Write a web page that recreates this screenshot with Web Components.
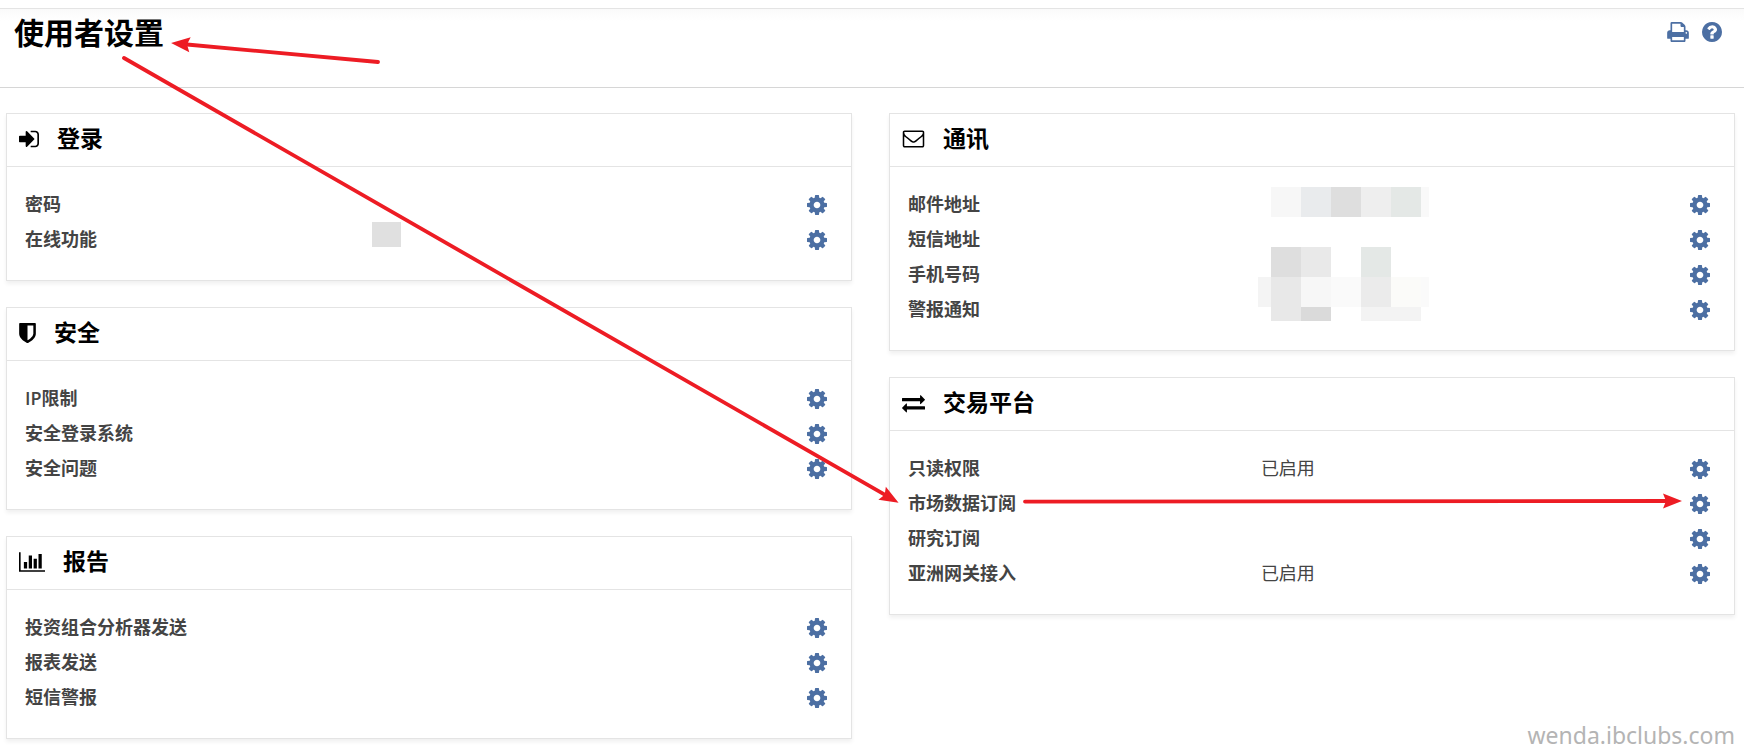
<!DOCTYPE html>
<html lang="zh-CN">
<head>
<meta charset="utf-8">
<meta name="viewport" content="width=device-width, initial-scale=1">
<title>使用者设置</title>
<style>
    body {
        margin: 0;
        background: #fff;
        color: #444;
        font-family: "Open Sans", "Noto Sans CJK SC", sans-serif;
        font-size: 18px;
    }
</style>
</head>
<body>
<settings-page>
    <page-header slot="header" heading="使用者设置"></page-header>

    <settings-card slot="left" icon="login" heading="登录">
        <setting-row label="密码"></setting-row>
        <setting-row label="在线功能"></setting-row>
        <pixel-mask slot="mask" name="online"></pixel-mask>
    </settings-card>
    <settings-card slot="left" icon="shield" heading="安全">
        <setting-row label="IP限制"></setting-row>
        <setting-row label="安全登录系统"></setting-row>
        <setting-row label="安全问题"></setting-row>
    </settings-card>
    <settings-card slot="left" icon="chart" heading="报告">
        <setting-row label="投资组合分析器发送"></setting-row>
        <setting-row label="报表发送"></setting-row>
        <setting-row label="短信警报"></setting-row>
    </settings-card>

    <settings-card slot="right" icon="mail" heading="通讯">
        <setting-row label="邮件地址"></setting-row>
        <setting-row label="短信地址"></setting-row>
        <setting-row label="手机号码"></setting-row>
        <setting-row label="警报通知"></setting-row>
        <pixel-mask slot="mask" name="contact"></pixel-mask>
    </settings-card>
    <settings-card slot="right" icon="exchange" heading="交易平台">
        <setting-row label="只读权限">已启用</setting-row>
        <setting-row label="市场数据订阅"></setting-row>
        <setting-row label="研究订阅"></setting-row>
        <setting-row label="亚洲网关接入">已启用</setting-row>
    </settings-card>

    <arrow-overlay slot="overlay"></arrow-overlay>
    <site-watermark slot="overlay">wenda.ibclubs.com</site-watermark>
</settings-page>

<script>
// viewBox, width, height, path
const ICONS = {
    cog: ['128 128 1536 1536', 20, 20, 'M1152 896q0-106-75-181t-181-75-181 75-75 181 75 181 181 75 181-75 75-181zm512-109v222q0 12-8 23t-20 13l-185 28q-19 54-39 91 35 50 107 138 10 12 10 25t-9 23q-27 37-99 108t-94 71q-12 0-26-9l-138-108q-44 23-91 38-16 136-29 186-7 28-36 28h-222q-14 0-24.5-8.5t-11.5-21.5l-28-184q-49-16-90-37l-141 107q-10 9-25 9-14 0-25-11-126-114-165-168-7-10-7-23 0-12 8-23 15-21 51-66.5t54-70.5q-27-50-41-99l-183-27q-13-2-21-12.5t-8-23.5v-222q0-12 8-23t19-13l186-28q14-46 39-92-40-57-107-138-10-12-10-24 0-10 9-23 26-36 98.5-107.5t94.5-71.5q13 0 26 10l138 107q44-23 91-38 16-136 29-186 7-28 36-28h222q14 0 24.5 8.5t11.5 21.5l28 184q49 16 90 37l142-107q9-9 24-9 13 0 25 10 129 119 165 170 7 8 7 22 0 12-8 23-15 21-51 66.5t-54 70.5q26 50 41 98l183 28q13 2 21 12.5t8 23.5z'],
    help: ['128 128 1536 1536', 20, 20, 'M1024 1376v-192q0-14-9-23t-23-9h-192q-14 0-23 9t-9 23v192q0 14 9 23t23 9h192q14 0 23-9t9-23zm256-672q0-88-55.5-163t-138.5-116-170-41q-243 0-371 213-15 24 8 42l132 100q7 6 19 6 16 0 25-12 53-68 86-92 34-24 86-24 48 0 85.5 26t37.5 59q0 38-20 61t-68 45q-63 28-115.5 86.5t-52.5 125.5v36q0 14 9 23t23 9h192q14 0 23-9t9-23q0-19 21.5-49.5t54.5-49.5q32-18 49-28.5t46-35 44.5-48 28-60.5 12.5-81zm384 192q0 209-103 385.5t-279.5 279.5-385.5 103-385.5-103-279.5-279.5-103-385.5 103-385.5 279.5-279.5 385.5-103 385.5 103 279.5 279.5 103 385.5z'],
    print: ['64 128 1664 1536', 22, 20, 'M448 1536h896v-256h-896v256zm0-640h896v-384h-160q-40 0-68-28t-28-68v-160h-640v640zm1152 64q0-26-19-45t-45-19-45 19-19 45 19 45 45 19 45-19 19-45zm128 0v416q0 13-9.5 22.5t-22.5 9.5h-224v160q0 40-28 68t-68 28h-960q-40 0-68-28t-28-68v-160h-224q-13 0-22.5-9.5t-9.5-22.5v-416q0-79 56.5-135.5t135.5-56.5h64v-544q0-40 28-68t68-28h672q40 0 88 20t76 48l152 152q28 28 48 76t20 88v256h64q79 0 135.5 56.5t56.5 135.5z'],
    login: ['128 128 1536 1536', 20, 20, 'M1312 896q0 26-19 45l-544 544q-19 19-45 19t-45-19-19-45v-288h-448q-26 0-45-19t-19-45v-384q0-26 19-45t45-19h448v-288q0-26 19-45t45-19 45 19l544 544q19 19 19 45zm352-352v704q0 119-84.5 203.5t-203.5 84.5h-320q-13 0-22.5-9.5t-9.5-22.5q0-4-1-20t-.5-26.5 3-23.5 10-19.5 20.5-6.5h320q66 0 113-47t47-113v-704q0-66-47-113t-113-47h-312l-11.5-1-11.5-3-8-5.5-7-9-2-13.5q0-4-1-20t-.5-26.5 3-23.5 10-19.5 20.5-6.5h320q119 0 203.5 84.5t84.5 203.5z'],
    shield: ['256 128 1280 1536', 17, 20, 'M1344 960v-640h-448v1137q119-63 213-137 235-184 235-360zm192-768v768q0 86-33.5 170.5t-83 150-118 127.5-126.5 103-121 77.5-89.5 49.5-42.5 20q-12 6-26 6t-26-6q-16-7-42.5-20t-89.5-49.5-121-77.5-126.5-103-118-127.5-83-150-33.5-170.5v-768q0-26 19-45t45-19h1152q26 0 45 19t19 45z'],
    chart: ['0 128 2048 1536', 26, 20, 'M640 896v512h-256v-512h256zm384-512v1024h-256v-1024h256zm1024 1152v128h-2048v-1536h128v1408h1920zm-640-896v768h-256v-768h256zm384-384v1152h-256v-1152h256z'],
    mail: ['0 128 1792 1664', 23, 20, 'M1664 1504v-768q-32 36-69 66-268 206-426 338-51 43-83 67t-86.5 48.5-102.5 24.5h-2q-48 0-102.5-24.5t-86.5-48.5-83-67q-158-132-426-338-37-30-69-66v768q0 13 9.5 22.5t22.5 9.5h1472q13 0 22.5-9.5t9.5-22.5zm0-1051v-24.5l-.5-13-3-12.5-5.5-9-9-7.5-14-2.5h-1472q-13 0-22.5 9.5t-9.5 22.5q0 168 147 284 193 152 401 317 6 5 35 29.5t46 37.5 44.5 31.5 50.5 27.5 43 9h2q20 0 43-9t50.5-27.5 44.5-31.5 46-37.5 35-29.5q208-165 401-317 54-43 100.5-115.5t46.5-131.5zm128-37v1088q0 66-47 113t-113 47h-1472q-66 0-113-47t-47-113v-1088q0-66 47-113t113-47h1472q66 0 113 47t47 113z'],
    exchange: ['0 128 1792 1536', 23, 20, 'M1792 1184v192q0 13-9.5 22.5t-22.5 9.5h-1376v192q0 13-9.5 22.5t-22.5 9.5q-12 0-24-10l-319-320q-9-9-9-22 0-14 9-23l320-320q9-9 23-9 13 0 22.5 9.5t9.5 22.5v192h1376q13 0 22.5 9.5t9.5 22.5zm0-544q0 14-9 23l-320 320q-9 9-23 9-13 0-22.5-9.5t-9.5-22.5v-192h-1376q-13 0-22.5-9.5t-9.5-22.5v-192q0-13 9.5-22.5t22.5-9.5h1376v-192q0-14 9-23t23-9q12 0 24 10l319 319q9 9 9 23z']
};

// x, y, width, height, colour of each mosaic tile, relative to the card
const MASKS = {
    online: [[365, 108, 29, 25, '#e0e0e0']],
    contact: [
        [381, 73, 30, 30, '#f7f7f7'], [411, 73, 30, 30, '#e9ebed'], [441, 73, 30, 30, '#dedede'],
        [471, 73, 30, 30, '#eeeeee'], [501, 73, 30, 30, '#e4e8e6'], [531, 73, 8, 30, '#f9f9f9'],
        [381, 133, 30, 30, '#dedede'], [411, 133, 30, 30, '#e9e9e9'], [471, 133, 30, 30, '#e4e8e6'],
        [368, 163, 13, 30, '#f4f4f4'], [381, 163, 30, 44, '#e8e8e8'], [411, 163, 30, 30, '#f7f7f7'],
        [441, 163, 30, 30, '#fafafa'], [471, 163, 30, 30, '#ebebeb'], [501, 163, 30, 30, '#fbfbf9'],
        [531, 163, 8, 30, '#fafafa'], [411, 193, 30, 14, '#dadada'], [471, 193, 60, 14, '#f3f3f3']
    ]
};

class UiIcon extends HTMLElement {
    constructor() {
        super();
        this.attachShadow({ mode: 'open' });
    }

    connectedCallback() {
        const [box, width, height, path] = ICONS[this.getAttribute('name')];
        this.shadowRoot.innerHTML = `
            <style>
                :host { display: block; flex: none; }
                svg { display: block; fill: currentColor; }
            </style>
            <svg viewBox="${box}" width="${width}" height="${height}" aria-hidden="true"><path d="${path}"/></svg>
        `;
    }
}

class PageHeader extends HTMLElement {
    constructor() {
        super();
        this.attachShadow({ mode: 'open' });
    }

    connectedCallback() {
        this.shadowRoot.innerHTML = `
            <style>
                :host {
                    display: flex;
                    justify-content: space-between;
                    align-items: flex-start;
                    padding: 0 22px 30px 14px;
                    border-top: 1px solid #e4e4e4;
                    border-bottom: 1px solid #d6d6d6;
                    background: linear-gradient(#fafafa, #fff 12px);
                }

                h1 {
                    margin: 0;
                    color: #000;
                    font-size: 30px;
                    line-height: 48px;
                }

                .actions {
                    display: flex;
                    gap: 13px;
                    padding-top: 13px;
                }

                button {
                    padding: 0;
                    border: 0;
                    background: none;
                    color: #4c6fa3;
                    cursor: pointer;
                }
            </style>
            <h1>${this.getAttribute('heading')}</h1>
            <div class="actions">
                <button type="button" aria-label="打印"><ui-icon name="print"></ui-icon></button>
                <button type="button" aria-label="帮助"><ui-icon name="help"></ui-icon></button>
            </div>
        `;
    }
}

class SettingsCard extends HTMLElement {
    constructor() {
        super();
        this.attachShadow({ mode: 'open' });
    }

    connectedCallback() {
        this.shadowRoot.innerHTML = `
            <style>
                :host {
                    display: block;
                    position: relative;
                    border: 1px solid #e4e4e4;
                    background: #fff;
                    box-shadow: 0 3px 4px rgba(0, 0, 0, 0.06);
                }

                header {
                    display: flex;
                    align-items: center;
                    gap: 18px;
                    padding: 0 12px 3px;
                    border-bottom: 1px solid #e4e4e4;
                    color: #000;
                }

                h2 {
                    margin: 0;
                    font-size: 23px;
                    line-height: 49px;
                }

                .rows {
                    padding: 20px 24px 23px 18px;
                }
            </style>
            <header>
                <ui-icon name="${this.getAttribute('icon')}"></ui-icon>
                <h2>${this.getAttribute('heading')}</h2>
            </header>
            <div class="rows"><slot></slot></div>
            <slot name="mask"></slot>
        `;
    }
}

class SettingRow extends HTMLElement {
    constructor() {
        super();
        this.attachShadow({ mode: 'open' });
    }

    connectedCallback() {
        const label = this.getAttribute('label');
        this.shadowRoot.innerHTML = `
            <style>
                :host {
                    display: grid;
                    grid-template-columns: 44% 1fr auto;
                    align-items: center;
                    line-height: 35px;
                }

                .label {
                    font-weight: 600;
                }

                button {
                    padding: 0;
                    border: 0;
                    background: none;
                    color: #4c6fa3;
                    cursor: pointer;
                }
            </style>
            <span class="label">${label}</span>
            <span><slot></slot></span>
            <button type="button" aria-label="设置${label}"><ui-icon name="cog"></ui-icon></button>
        `;
    }
}

class PixelMask extends HTMLElement {
    constructor() {
        super();
        this.attachShadow({ mode: 'open' });
    }

    connectedCallback() {
        const tiles = MASKS[this.getAttribute('name')]
            .map(([x, y, w, h, fill]) => `<rect x="${x}" y="${y}" width="${w}" height="${h}" fill="${fill}"/>`)
            .join('');
        this.shadowRoot.innerHTML = `
            <style>
                :host {
                    position: absolute;
                    inset: 0;
                    pointer-events: none;
                }
                svg { display: block; width: 100%; height: 100%; }
            </style>
            <svg shape-rendering="crispEdges" aria-hidden="true">${tiles}</svg>
        `;
    }
}

class ArrowOverlay extends HTMLElement {
    constructor() {
        super();
        this.attachShadow({ mode: 'open' });
        this.shadowRoot.innerHTML = `
            <style>
                :host {
                    position: absolute;
                    inset: 0;
                    pointer-events: none;
                }
                svg { display: block; width: 100%; height: 100%; }
                line { stroke: #ed1c24; stroke-width: 3.8; stroke-linecap: round; }
            </style>
            <svg aria-hidden="true">
                <defs>
                    <marker id="head" markerUnits="userSpaceOnUse" markerWidth="22" markerHeight="18"
                            viewBox="0 0 22 18" refX="4" refY="9" orient="auto">
                        <path d="M1 1.5L20 9L1 16.5L4 9z" fill="#ed1c24"/>
                    </marker>
                </defs>
                <line x1="378" y1="62" x2="187" y2="44.5" marker-end="url(#head)"/>
                <line x1="124" y1="58" x2="884.7" y2="494.7" marker-end="url(#head)"/>
                <line x1="1025" y1="501.6" x2="1666" y2="501" marker-end="url(#head)"/>
            </svg>
        `;
    }
}

class SiteWatermark extends HTMLElement {
    constructor() {
        super();
        this.attachShadow({ mode: 'open' });
        this.shadowRoot.innerHTML = `
            <style>
                :host {
                    position: absolute;
                    right: 9px;
                    bottom: 3px;
                    color: #b4b4b4;
                    font-family: "Noto Sans", sans-serif;
                    font-size: 23px;
                    line-height: 34px;
                }
            </style>
            <slot></slot>
        `;
    }
}

class SettingsPage extends HTMLElement {
    constructor() {
        super();
        this.attachShadow({ mode: 'open' });
        this.shadowRoot.innerHTML = `
            <style>
                :host {
                    display: block;
                    position: relative;
                    box-sizing: border-box;
                    min-height: 100vh;
                    padding-top: 8px;
                }

                main {
                    display: grid;
                    grid-template-columns: 1fr 1fr;
                    align-items: start;
                    gap: 37px;
                    padding: 25px 9px 16px 6px;
                }

                .column {
                    display: grid;
                    gap: 26px;
                }
            </style>
            <slot name="header"></slot>
            <main>
                <div class="column"><slot name="left"></slot></div>
                <div class="column"><slot name="right"></slot></div>
            </main>
            <slot name="overlay"></slot>
        `;
    }
}

customElements.define('ui-icon', UiIcon);
customElements.define('page-header', PageHeader);
customElements.define('settings-card', SettingsCard);
customElements.define('setting-row', SettingRow);
customElements.define('pixel-mask', PixelMask);
customElements.define('arrow-overlay', ArrowOverlay);
customElements.define('site-watermark', SiteWatermark);
customElements.define('settings-page', SettingsPage);
</script>
</body>
</html>
